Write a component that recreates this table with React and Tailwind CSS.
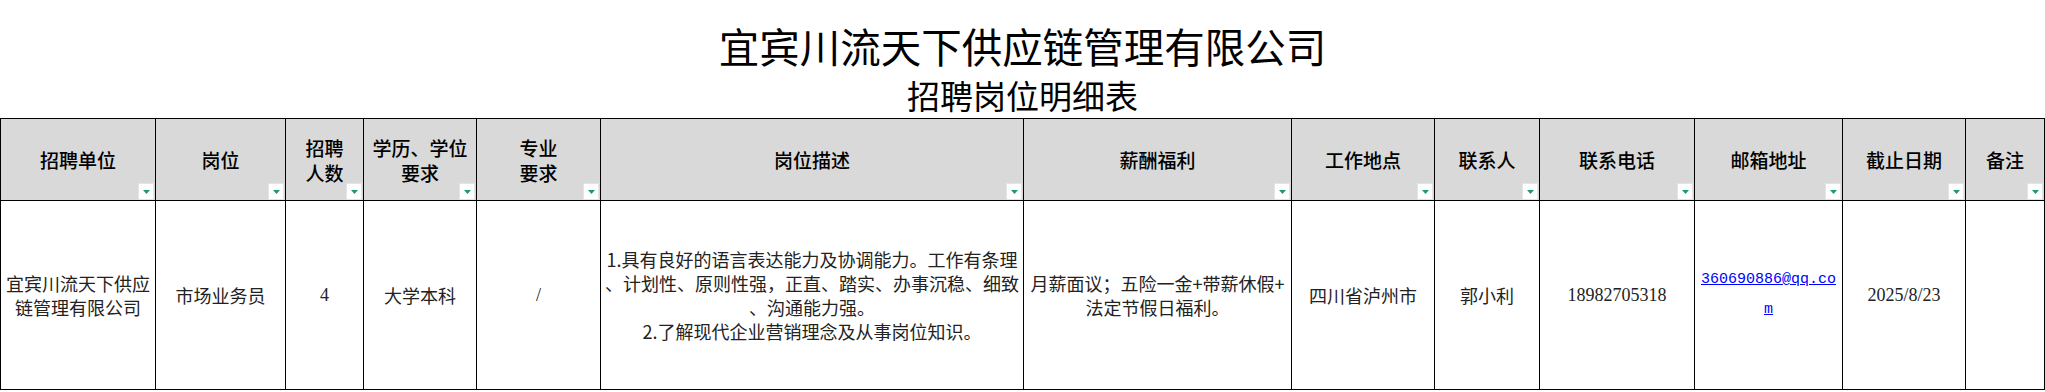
import React from 'react';

const headers = [
    { lines: ['招聘单位'], w: 'w-[155px]' },
    { lines: ['岗位'], w: 'w-[130px]' },
    { lines: ['招聘', '人数'], w: 'w-[78px]' },
    { lines: ['学历、学位', '要求'], w: 'w-[113px]' },
    { lines: ['专业', '要求'], w: 'w-[124px]' },
    { lines: ['岗位描述'], w: 'w-[423px]' },
    { lines: ['薪酬福利'], w: 'w-[268px]' },
    { lines: ['工作地点'], w: 'w-[143px]' },
    { lines: ['联系人'], w: 'w-[105px]' },
    { lines: ['联系电话'], w: 'w-[155px]' },
    { lines: ['邮箱地址'], w: 'w-[148px]' },
    { lines: ['截止日期'], w: 'w-[123px]' },
    { lines: ['备注'], w: 'w-[79px]' },
];

const FilterButton = () => (
    <span className="absolute right-[1px] bottom-0 flex h-[17px] w-[16px] items-center justify-center border border-[#e4e4e4] bg-white">
        <svg width="7" height="4" viewBox="0 0 7 4">
            <path d="M0 0H7L3.5 4Z" fill="#1e9b6b" />
        </svg>
    </span>
);

const cell = 'border border-black p-0 text-center align-middle';

const App = () => {
    return (
        <div className="w-[2045px] bg-white font-['Noto_Sans_CJK_SC',sans-serif] text-black">
            {/* title */}
            <div className="flex h-[118px] flex-col items-center font-['Liberation_Sans','Noto_Sans_CJK_SC',sans-serif]">
                <h1 className="pt-[25px] text-[40.5px] leading-[48px] font-normal">宜宾川流天下供应链管理有限公司</h1>
                <h2 className="mt-[5px] text-[33px] leading-[40px] font-normal">招聘岗位明细表</h2>
            </div>

            <table className="w-[2044px] table-fixed border-collapse">
                <colgroup>
                    {headers.map((h, i) => (
                        <col key={i} className={h.w} />
                    ))}
                </colgroup>
                <thead>
                    <tr className="h-[82px] bg-[#d9d9d9]">
                        {headers.map((h, i) => (
                            <th key={i} className={`${cell} relative text-[19px] leading-[25px] font-medium`}>
                                {h.lines.map((l, j) => (
                                    <div key={j} className="whitespace-nowrap">{l}</div>
                                ))}
                                <FilterButton />
                            </th>
                        ))}
                    </tr>
                </thead>
                <tbody className="text-[18px] leading-[24px] text-[#222]">
                    <tr className="h-[189px]">
                        <td className={cell}>
                            <div className="whitespace-nowrap">宜宾川流天下供应</div>
                            <div className="whitespace-nowrap">链管理有限公司</div>
                        </td>
                        <td className={cell}>市场业务员</td>
                        <td className={`${cell} font-['Liberation_Serif',serif]`}>4</td>
                        <td className={cell}>大学本科</td>
                        <td className={`${cell} font-['Liberation_Serif',serif]`}>/</td>
                        <td className={cell}>
                            <div className="whitespace-nowrap">1.具有良好的语言表达能力及协调能力。工作有条理</div>
                            <div className="whitespace-nowrap">、计划性、原则性强，正直、踏实、办事沉稳、细致</div>
                            <div className="whitespace-nowrap">、沟通能力强。</div>
                            <div className="whitespace-nowrap">2.了解现代企业营销理念及从事岗位知识。</div>
                        </td>
                        <td className={cell}>
                            <div className="whitespace-nowrap">月薪面议；五险一金+带薪休假+</div>
                            <div className="whitespace-nowrap">法定节假日福利。</div>
                        </td>
                        <td className={cell}>四川省泸州市</td>
                        <td className={cell}>郭小利</td>
                        <td className={`${cell} font-['Liberation_Serif',serif]`}>18982705318</td>
                        <td className={cell}>
                            <a
                                href="#"
                                className="mx-auto block w-[138px] break-all font-['Liberation_Mono',monospace] text-[15px] leading-[30px] text-[#0000ff] underline"
                            >
                                360690886@qq.com
                            </a>
                        </td>
                        <td className={`${cell} font-['Liberation_Serif',serif]`}>2025/8/23</td>
                        <td className={cell}></td>
                    </tr>
                </tbody>
            </table>
        </div>
    );
};

export default App;
